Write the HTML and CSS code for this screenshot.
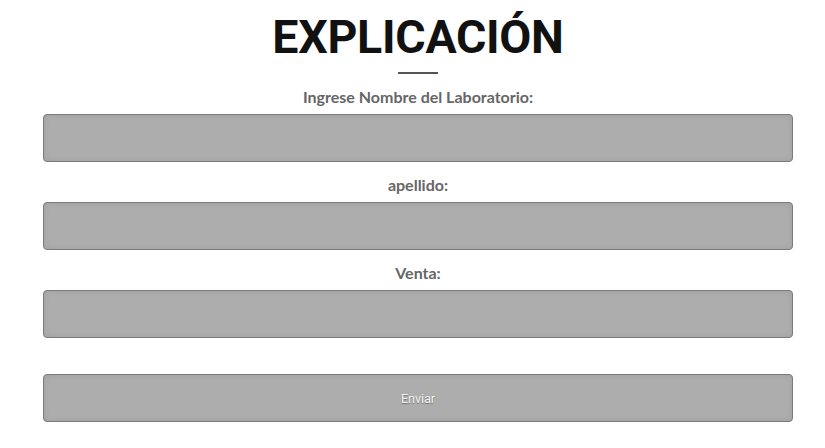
FILE: index.html
```html
<!DOCTYPE html>
<html lang="es">
<head>
<meta charset="utf-8">
<link rel="stylesheet" href="styles.css">
</head>
<body>
<div class="wrap">
  <h1 class="title">EXPLICACIÓN</h1>
  <div class="rule"></div>
  <form class="form">
    <label class="label">Ingrese Nombre del Laboratorio:</label>
    <input class="field" type="text">
    <label class="label">apellido:</label>
    <input class="field" type="text">
    <label class="label">Venta:</label>
    <input class="field" type="text">
    <button class="btn" type="button">Enviar</button>
  </form>
</div>
</body>
</html>
```
FILE: styles.css
```css
html, body { margin: 0; padding: 0; background: #fff; }
.wrap {
  width: 750px;
  margin-left: 43px;
  display: flex;
  flex-direction: column;
  align-items: center;
}
.title {
  margin: 8px 0 0;
  font-family: Roboto, "Liberation Sans", sans-serif;
  font-weight: 700;
  font-size: 46.5px;
  line-height: 58px;
  color: #111;
  letter-spacing: -0.3px;
}
.rule {
  width: 40px;
  height: 2px;
  background: #555;
  margin-top: 6px;
}
.form {
  width: 100%;
  display: flex;
  flex-direction: column;
  align-items: center;
}
.label {
  font-family: Lato, "Liberation Sans", sans-serif;
  font-weight: 700;
  font-size: 16px;
  line-height: 19px;
  color: #666;
  margin-top: 13px;
  margin-bottom: 8px;
}
.field, .btn {
  box-sizing: border-box;
  width: 750px;
  height: 48px;
  margin: 0;
  background: #adadad;
  border: 1px solid #7a7a7a;
  border-radius: 4px;
  box-shadow: inset 0 0 6px rgba(0,0,0,0.08);
}
.btn {
  margin-top: 36px;
  font-family: Roboto, "Liberation Sans", sans-serif;
  font-size: 12.5px;
  color: #f4f4f4;
  text-shadow: 0 1px 1px rgba(0,0,0,0.35);
}
```
